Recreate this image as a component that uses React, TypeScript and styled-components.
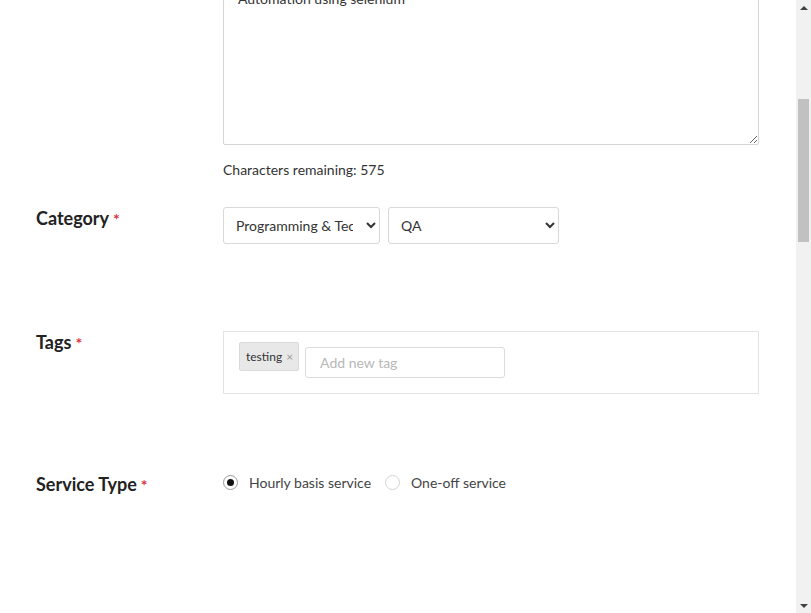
import React, { useLayoutEffect, useRef } from "react";
import styled, { createGlobalStyle } from "styled-components";

const Global = createGlobalStyle`
  html, body { margin: 0; padding: 0; background: #fff; overflow: hidden; }
  body { font-family: Lato, "Open Sans", Arial, sans-serif; color: #333; }
  * { box-sizing: border-box; }
`;

const Viewport = styled.div`
  display: flex;
  width: 811px;
  height: 613px;
  overflow: hidden;
`;

const Scroller = styled.div`
  flex: 1;
  height: 100%;
  overflow: hidden;
`;

const ScrollBar = styled.div`
  width: 15px;
  height: 100%;
  background: #f1f1f1;
  display: flex;
  flex-direction: column;
`;

const ArrowButton = styled.div`
  height: 15px;
  display: flex;
  align-items: center;
  justify-content: center;
`;

const Track = styled.div`
  flex: 1;
  display: flex;
  flex-direction: column;
`;

const Thumb = styled.div`
  margin: 84px 2px 0;
  height: 143px;
  background: #c1c1c1;
`;

const Page = styled.div`
  min-height: 2499px;
  padding: 40px 0 0 36px;
`;

const Heading = styled.h1`
  margin: 0 0 40px;
  font-size: 28px;
  line-height: 36px;
  font-weight: 700;
  color: #222;
`;

const Row = styled.div<{ $after: number }>`
  display: grid;
  grid-template-columns: 187px 536px;
  align-items: start;
  margin-bottom: ${(p) => p.$after}px;
`;

const Label = styled.label`
  font-size: 18px;
  line-height: 22px;
  font-weight: 700;
  color: #222;
`;

const Required = styled.span`
  color: #e0323c;
  font-size: 16px;
  margin-left: 4px;
`;

const Field = styled.div`
  display: flex;
  flex-direction: column;
`;

const TextInput = styled.input`
  height: 40px;
  width: 100%;
  border: 1px solid #d6d6d6;
  border-radius: 2px;
  padding: 0 14px;
  font: 14px Lato, sans-serif;
  color: #333;
`;

const TextArea = styled.textarea`
  width: 100%;
  height: 166px;
  border: 1px solid #d6d6d6;
  border-radius: 2px;
  padding: 9px 14px;
  font: 14px/20px Lato, sans-serif;
  color: #333;
  resize: vertical;
  outline: none;
`;

const CharCount = styled.div`
  margin-top: 16px;
  font-size: 14px;
  line-height: 17px;
  color: #333;
`;

const SelectGroup = styled.div`
  display: flex;
  gap: 8px;
`;

const Select = styled.select<{ $w: number }>`
  width: ${(p) => p.$w}px;
  height: 37px;
  border: 1px solid #d9d9d9;
  border-radius: 3px;
  background: #fff;
  padding: 0 10px 0 8px;
  font: 14px Lato, sans-serif;
  color: #333;
`;

const TagBox = styled.div`
  height: 63px;
  border: 1px solid #e3e3e3;
  padding: 10px 15px;
  display: flex;
  align-items: flex-start;
  gap: 6px;
`;

const Chip = styled.span`
  display: inline-flex;
  align-items: center;
  height: 29px;
  padding: 0 5px 0 6px;
  background: #e8e8e8;
  border: 1px solid #d9d9d9;
  border-radius: 2px;
  font-size: 12px;
  color: #333;
`;

const ChipClose = styled.span`
  margin-left: 4px;
  color: #9a9a9a;
  font-size: 12px;
`;

const TagInput = styled.input`
  margin-top: 5px;
  width: 200px;
  height: 31px;
  border: 1px solid #dcdcdc;
  border-radius: 3px;
  padding: 0 14px;
  font: 14px Lato, sans-serif;
  color: #333;
  &::placeholder { color: #b8b8b8; }
`;

const RadioGroup = styled.div`
  display: flex;
  align-items: center;
  height: 20px;
  margin-top: -1px;
`;

const RadioOption = styled.label`
  display: inline-flex;
  align-items: center;
  margin-right: 14px;
  font-size: 14px;
  color: #444;
  cursor: pointer;
`;

const RadioCircle = styled.span<{ $on: boolean }>`
  width: 15px;
  height: 15px;
  border-radius: 50%;
  border: 1px solid ${(p) => (p.$on ? "#9a9a9a" : "#d4d4d4")};
  background: #fff;
  display: inline-flex;
  align-items: center;
  justify-content: center;
  margin-right: 11px;
  &::after {
    content: "";
    width: 7px;
    height: 7px;
    border-radius: 50%;
    background: ${(p) => (p.$on ? "#111" : "transparent")};
  }
`;

const PriceInput = styled(TextInput)`
  width: 200px;
`;

const SaveButton = styled.button`
  height: 40px;
  padding: 0 24px;
  border: none;
  border-radius: 3px;
  background: #1dbf73;
  color: #fff;
  font: 700 15px Lato, sans-serif;
  width: fit-content;
`;

const Arrow = ({ up }: { up: boolean }) => (
  <svg width="8" height="4" viewBox="0 0 8 4">
    <path d={up ? "M0 4 L4 0 L8 4 Z" : "M0 0 L4 4 L8 0 Z"} fill="#404040" />
  </svg>
);

export default function App() {
  const scrollRef = useRef<HTMLDivElement>(null);
  const areaRef = useRef<HTMLTextAreaElement>(null);
  useLayoutEffect(() => {
    const sc = scrollRef.current;
    const el = areaRef.current;
    if (!sc || !el) return;
    const top = el.getBoundingClientRect().top - sc.getBoundingClientRect().top + sc.scrollTop;
    sc.scrollTop = top + 21;
  }, []);

  return (
    <>
      <Global />
      <Viewport>
        <Scroller ref={scrollRef}>
          <Page>
            <Heading>Create a new service</Heading>
            <Row $after={40}>
              <Label>
                Service Title<Required>*</Required>
              </Label>
              <Field>
                <TextInput defaultValue="I will do automation testing for your web application" />
              </Field>
            </Row>
            <Row $after={29}>
              <Label>
                Description<Required>*</Required>
              </Label>
              <Field>
                <TextArea ref={areaRef} defaultValue="Automation using selenium" />
                <CharCount>Characters remaining: 575</CharCount>
              </Field>
            </Row>
            <Row $after={87}>
              <Label>
                Category<Required>*</Required>
              </Label>
              <SelectGroup>
                <Select $w={157} defaultValue="prog">
                  <option value="prog">Programming &amp; Tech</option>
                  <option value="design">Design</option>
                </Select>
                <Select $w={171} defaultValue="qa">
                  <option value="qa">QA</option>
                  <option value="web">Web Development</option>
                </Select>
              </SelectGroup>
            </Row>
            <Row $after={79}>
              <Label>
                Tags<Required>*</Required>
              </Label>
              <TagBox>
                <Chip>
                  testing<ChipClose>×</ChipClose>
                </Chip>
                <TagInput placeholder="Add new tag" />
              </TagBox>
            </Row>
            <Row $after={120}>
              <Label>
                Service Type<Required>*</Required>
              </Label>
              <RadioGroup>
                <RadioOption>
                  <RadioCircle $on={true} />
                  Hourly basis service
                </RadioOption>
                <RadioOption>
                  <RadioCircle $on={false} />
                  One-off service
                </RadioOption>
              </RadioGroup>
            </Row>
            <Row $after={80}>
              <Label>
                Price per hour<Required>*</Required>
              </Label>
              <PriceInput defaultValue="25" />
            </Row>
            <Row $after={80}>
              <Label />
              <SaveButton>Save</SaveButton>
            </Row>
          </Page>
        </Scroller>
        <ScrollBar>
          <ArrowButton>
            <Arrow up={true} />
          </ArrowButton>
          <Track>
            <Thumb />
          </Track>
          <ArrowButton>
            <Arrow up={false} />
          </ArrowButton>
        </ScrollBar>
      </Viewport>
    </>
  );
}
